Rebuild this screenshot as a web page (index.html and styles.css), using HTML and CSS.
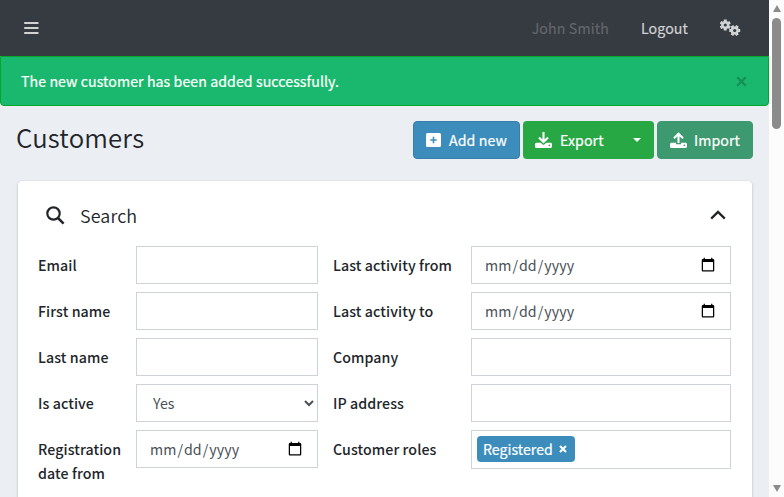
FILE: index.html
```html
<!DOCTYPE html>
<html lang="en">
<head>
<meta charset="utf-8">
<title>Customers</title>
<link rel="stylesheet" href="styles.css">
</head>
<body>
<div class="window">
<div class="page">
  <nav class="navbar">
    <svg class="bars" width="15" height="12" viewBox="0 0 15 12"><path d="M.2 1h14.3M.2 6h14.3M.2 11h14.3" stroke="currentColor" stroke-width="2"/></svg>
    <span class="user">John Smith</span>
    <span class="logout">Logout</span>
    <svg class="cogs" width="21" height="18" viewBox="0 0 21 18">
      <g transform="translate(5.3 6)"><path d="M0-5.5V5.5M-4.8-2.75 4.8 2.75M-4.8 2.75 4.8-2.75" stroke="currentColor" stroke-width="3"/><circle r="4.1" fill="currentColor"/><circle r="1.6" class="hole"/></g>
      <g transform="translate(14.7 11.5)"><path d="M-5.5 0H5.5M-2.75-4.8 2.75 4.8M2.75-4.8-2.75 4.8" stroke="currentColor" stroke-width="3"/><circle r="4.1" fill="currentColor"/><circle r="1.6" class="hole"/></g>
    </svg>
  </nav>
  <div class="alert"><span>The new customer has been added successfully.</span>
    <svg class="close" width="11" height="11" viewBox="0 0 11 11"><path d="M1.2 1.2 9.8 9.8M9.8 1.2 1.2 9.8" stroke="currentColor" stroke-width="2.2"/></svg>
  </div>
  <header class="heading">
    <h1>Customers</h1>
    <div class="actions">
      <button class="btn add"><svg width="15" height="14" viewBox="0 0 15 14"><rect width="15" height="14" rx="1.6" fill="#fff"/><path d="M7.5 3.8v6.4M4.3 7h6.4" stroke="#3c8dbc" stroke-width="1.6"/></svg><span>Add new</span></button>
      <div class="group">
        <button class="btn export"><svg width="17" height="16" viewBox="0 0 17 16"><path d="M8.5 0v9M4 5.5 8.5 10 13 5.5" fill="none" stroke="#fff" stroke-width="2.1"/><path fill="#fff" d="M1.5 10.7h4.1l2.9 2.2 2.9-2.2h4.1c.8 0 1.5.7 1.5 1.5v2.3c0 .8-.7 1.5-1.5 1.5h-14A1.5 1.5 0 0 1 0 14.5v-2.3c0-.8.7-1.5 1.5-1.5z"/><circle cx="14.3" cy="13.4" r=".8" fill="#28a745"/></svg><span>Export</span></button>
        <button class="btn caret" aria-label="More"><i></i></button>
      </div>
      <button class="btn import"><svg width="17" height="16" viewBox="0 0 17 16"><path d="M8.5 11V2M4 6.2 8.5 1.7 13 6.2" fill="none" stroke="#fff" stroke-width="2.1"/><path fill="#fff" d="M1.5 10.7H6v1.6h5v-1.6h4.5c.8 0 1.5.7 1.5 1.5v2.3c0 .8-.7 1.5-1.5 1.5h-14A1.5 1.5 0 0 1 0 14.5v-2.3c0-.8.7-1.5 1.5-1.5z"/><circle cx="14.3" cy="13.4" r=".8" fill="#3d9970"/></svg><span>Import</span></button>
    </div>
  </header>
  <section class="card">
    <div class="search">
      <svg width="19" height="19" viewBox="0 0 19 19"><circle cx="7.5" cy="7.5" r="6.2" fill="none" stroke="currentColor" stroke-width="2.2"/><path d="m12 12 5.6 5.6" stroke="currentColor" stroke-width="2.5"/></svg>
      <span class="title">Search</span>
      <svg class="chevron" width="16" height="10" viewBox="0 0 16 10"><path d="M1.2 8.6 8 1.9l6.8 6.7" fill="none" stroke="currentColor" stroke-width="2.3"/></svg>
    </div>
    <form class="fields">
      <label>Email</label><input type="text">
      <label>Last activity from</label><input type="date">
      <label>First name</label><input type="text">
      <label>Last activity to</label><input type="date">
      <label>Last name</label><input type="text">
      <label>Company</label><input type="text">
      <label>Is active</label><select><option>Yes</option></select>
      <label>IP address</label><input type="text">
      <label>Registration<br>date from</label><input type="date">
      <label>Customer roles</label>
      <div class="roles"><span class="tag"><span>Registered</span><svg width="8" height="8" viewBox="0 0 8 8"><path d="m1 1 6 6M7 1 1 7" stroke="#fff" stroke-width="2"/></svg></span></div>
    </form>
  </section>
</div>
<div class="scrollbar"><i class="up"></i><i class="thumb"></i><i class="down"></i></div>
</div>
</body>
</html>
```
FILE: styles.css
```css
* { box-sizing: border-box; }
body {
  margin: 0;
  font-family: "Noto Sans CJK SC", "Noto Sans", sans-serif;
  font-size: 14.2px;
  line-height: 24px;
  color: #212529;
  background: #ebeef3;
}
svg { display: block; flex: none; }
.window { display: flex; height: 497px; overflow: hidden; }
.page { width: 769px; flex: none; }
.navbar {
  display: flex;
  align-items: center;
  height: 56px;
  padding: 0 28px 0 24px;
  background: #363a41;
  color: #d0d2d4;
  white-space: nowrap;
}
.user { margin-left: auto; color: #62676c; letter-spacing: .12px; }
.logout { margin: 0 32px; letter-spacing: .1px; }
.user, .logout, .alert, .btn, .tag { -webkit-text-stroke: .2px; }
.cogs .hole { fill: #363a41; }
.alert {
  display: flex;
  align-items: center;
  justify-content: space-between;
  height: 50px;
  padding: 0 21px 0 20px;
  border: 1px solid #06a52b;
  border-radius: 0 0 4px 4px;
  background: #1ab86e;
  color: #fff;
  letter-spacing: .06px;
}
.close { color: #148f56; }
.heading {
  display: flex;
  align-items: flex-start;
  justify-content: space-between;
  height: 75px;
  padding: 15px 16px 0;
}
h1 { margin: 0; font-size: 25.7px; font-weight: 350; line-height: 31px; letter-spacing: .18px; }
.actions { display: flex; gap: 3px; }
.group { display: flex; overflow: hidden; border-radius: 4px; background: #28a745; }
.btn {
  display: flex;
  align-items: center;
  height: 38px;
  margin: 0;
  padding: 0 0 0 12px;
  border: 1px solid;
  border-radius: 4px;
  color: #fff;
  font: 400 14.2px/24px "Noto Sans CJK SC", "Noto Sans", sans-serif;
  letter-spacing: .07px;
  white-space: nowrap;
}
.add { width: 107px; gap: 8px; background: #3c8dbc; border-color: #367fa9; }
.export, .caret { background: none; border-color: transparent; border-radius: 0; }
.export { width: 97px; gap: 8px; padding-left: 11px; }
.caret { width: 34px; }
.caret i { border: 4px solid transparent; border-top-color: #fff; border-bottom: 0; }
.import { width: 96px; gap: 7px; background: #3d9970; border-color: #3d9970; }
.card {
  height: 340px;
  margin: 0 17px 0 18px;
  border-radius: 4px;
  background: #fff;
  box-shadow: 0 0 1px rgba(0, 0, 0, .13), 0 1px 3px rgba(0, 0, 0, .2);
}
.search {
  display: flex;
  align-items: center;
  height: 65px;
  padding: 4px 26px 0 28px;
  gap: 15px;
  font-size: 17.9px;
}
.title { margin-top: -1px; font-weight: 350; letter-spacing: .12px; }
.chevron { margin-left: auto; margin-top: -2px; }
.fields {
  display: grid;
  grid-template-columns: 98px 182px 153px 260px;
  grid-auto-rows: 38px;
  row-gap: 8px;
  margin: 0 20px;
}
label { padding-top: 7px; font-weight: 500; letter-spacing: .09px; white-space: nowrap; }
label:nth-child(4n + 3) { padding-left: 15px; }
input, select {
  width: 100%;
  height: 38px;
  margin: 0;
  padding: 6px 12px;
  border: 1px solid #ced2d9;
  border-radius: 0;
  background: #fff;
  color: #495057;
  font: 400 14.2px/24px "Noto Sans CJK SC", "Noto Sans", sans-serif;
}
input { letter-spacing: .05px; }
input::-webkit-calendar-picker-indicator { width: 16px; height: 16px; }
.roles { height: 39px; padding: 5px; border: 1px solid #ced2d9; }
.tag {
  display: flex;
  align-items: center;
  gap: 6px;
  width: 98px;
  height: 26px;
  padding-left: 6px;
  border-radius: 4px;
  background: #3c8dbc;
  color: #fff;
}
.scrollbar {
  display: flex;
  flex-direction: column;
  align-items: center;
  width: 15px;
  padding: 5px 0;
  background: #fcfcfc;
}
.up { border: 4.5px solid transparent; border-top: 0; border-bottom: 7px solid #8b8b8b; }
.thumb { width: 9px; height: 111px; margin-top: 6px; border-radius: 5px; background: #8b8b8b; }
.down { margin-top: auto; border: 4.5px solid transparent; border-bottom: 0; border-top: 7px solid #8b8b8b; }
```
